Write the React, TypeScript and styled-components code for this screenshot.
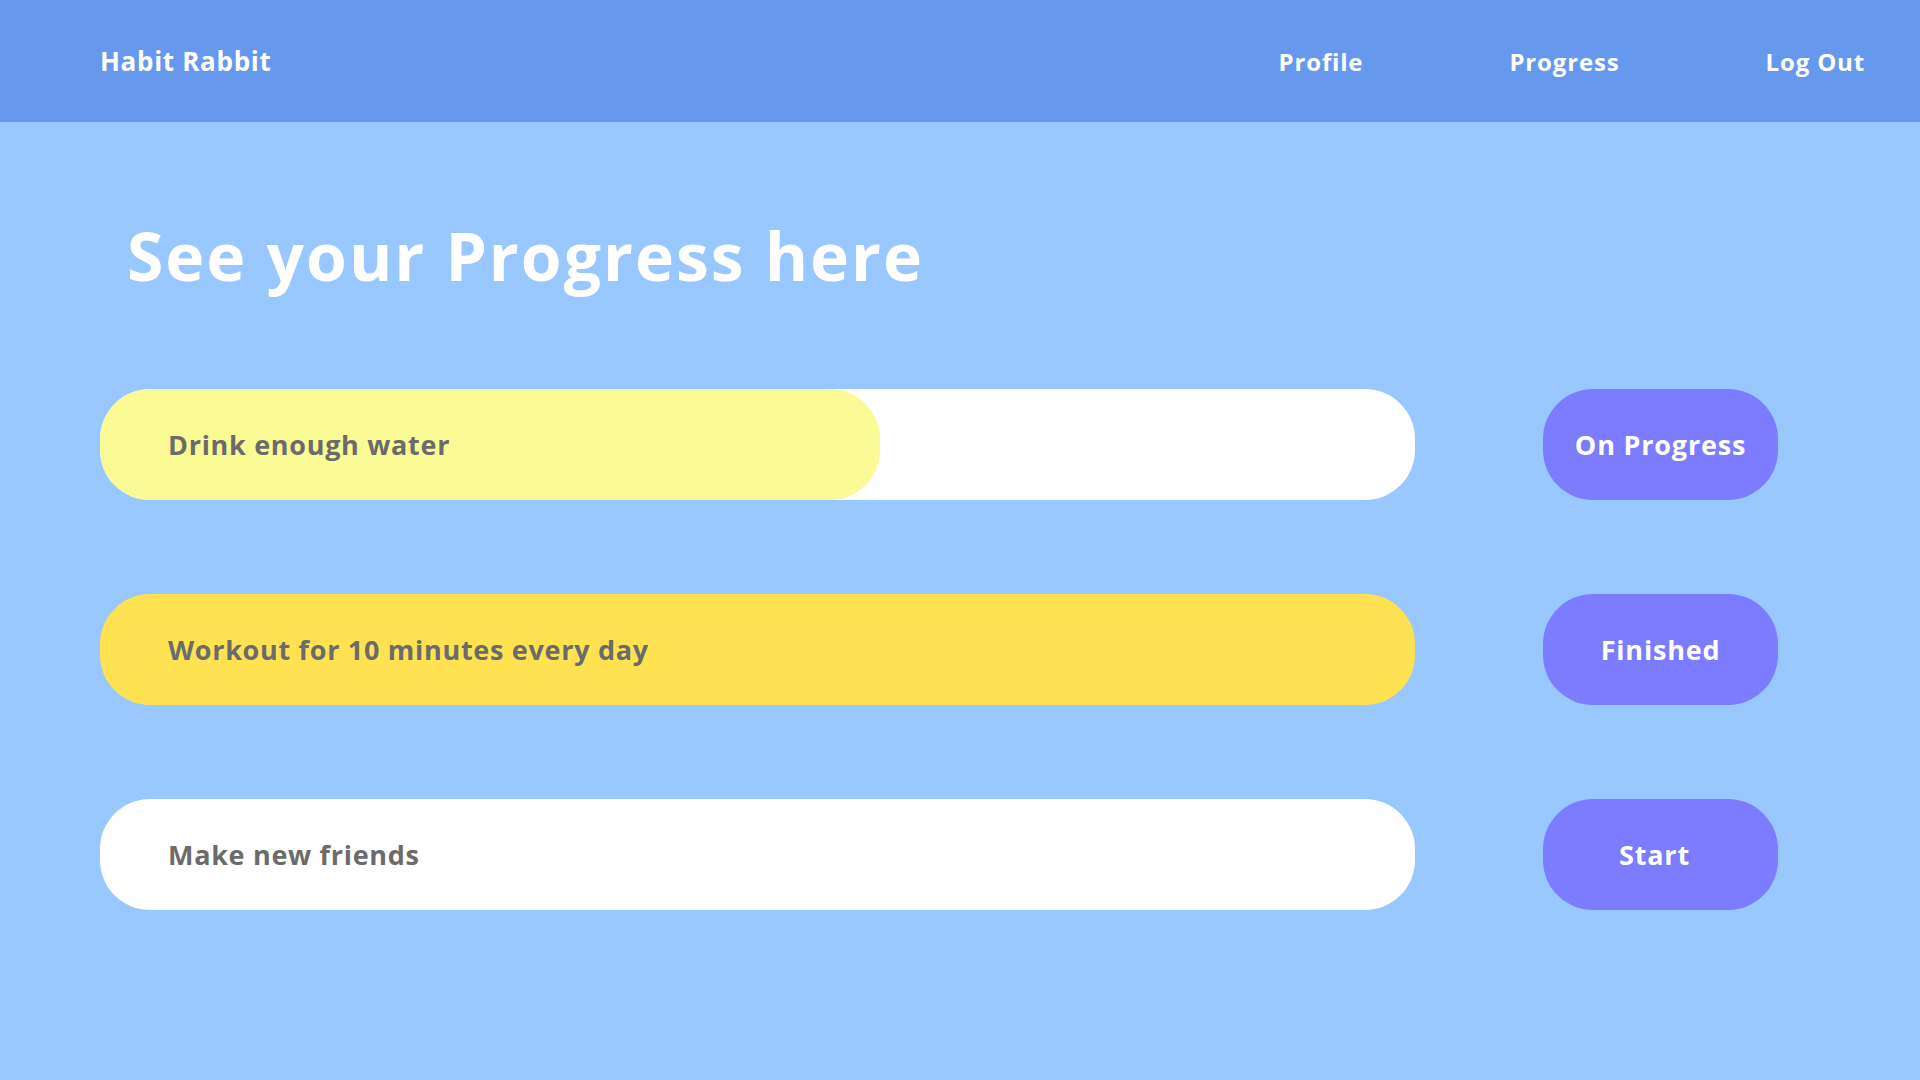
import React from "react";
import styled, { createGlobalStyle } from "styled-components";

const Global = createGlobalStyle`
  html, body { margin: 0; padding: 0; }
  body {
    background: #99c7ff;
    font-family: "Open Sans", "Liberation Sans", sans-serif;
    min-height: 1080px;
  }
`;

const Page = styled.div`
  width: 1920px;
  min-height: 1080px;
  background: #99c7ff;
`;

const Header = styled.header`
  height: 122px;
  background: #6699ee;
  display: flex;
  align-items: center;
  justify-content: space-between;
  padding: 0 55px 0 100px;
  box-sizing: border-box;
`;

const Brand = styled.div`
  color: #ffffff;
  font-weight: 700;
  font-size: 26px;
  letter-spacing: 0.7px;
`;

const Nav = styled.nav`
  display: flex;
  gap: 146px;
`;

const NavLink = styled.a`
  color: #ffffff;
  font-weight: 700;
  font-size: 24px;
  letter-spacing: 0.85px;
  text-decoration: none;
  cursor: pointer;
`;

const Main = styled.main`
  padding: 88px 100px 0 100px;
`;

const Title = styled.h1`
  margin: 0 0 0 27px;
  color: #ffffff;
  font-weight: 700;
  font-size: 66px;
  line-height: 90px;
  letter-spacing: 2px;
`;

const Rows = styled.div`
  margin-top: 89px;
  display: grid;
  grid-template-columns: 1315px 235px;
  grid-auto-rows: 111px;
  column-gap: 128px;
  row-gap: 94px;
`;

const Track = styled.div<{ $bg: string }>`
  position: relative;
  border-radius: 50px;
  background: ${(p) => p.$bg};
  overflow: hidden;
  display: flex;
  align-items: center;
`;

const Fill = styled.div`
  position: absolute;
  left: 0;
  top: 0;
  bottom: 0;
  border-radius: 50px;
  background: #fafb94;
`;

const Label = styled.span`
  position: relative;
  padding-left: 68px;
  color: #6b6b6b;
  font-weight: 700;
  font-size: 27px;
  letter-spacing: 0.7px;
`;

const StatusButton = styled.button<{ $shift?: number }>`
  border: none;
  border-radius: 50px;
  background: #7b7cff;
  color: #ffffff;
  font-family: inherit;
  font-weight: 700;
  font-size: 27px;
  letter-spacing: 0.8px;
  cursor: pointer;
  padding: 0 ${(p) => p.$shift ?? 0}px 0 0;
`;

type Habit = {
  name: string;
  bg: string;
  fill?: number;
  status: string;
  shift?: number;
};

const habits: Habit[] = [
  { name: "Drink enough water", bg: "#ffffff", fill: 780, status: "On Progress" },
  { name: "Workout for 10 minutes every day", bg: "#ffe252", status: "Finished" },
  { name: "Make new friends", bg: "#ffffff", status: "Start", shift: 12 },
];

export default function App() {
  return (
    <Page>
      <Global />
      <Header>
        <Brand>Habit Rabbit</Brand>
        <Nav>
          <NavLink>Profile</NavLink>
          <NavLink>Progress</NavLink>
          <NavLink>Log Out</NavLink>
        </Nav>
      </Header>
      <Main>
        <Title>See your Progress here</Title>
        <Rows>
          {habits.map((h) => (
            <React.Fragment key={h.name}>
              <Track $bg={h.bg}>
                {h.fill ? <Fill style={{ width: h.fill }} /> : null}
                <Label>{h.name}</Label>
              </Track>
              <StatusButton $shift={h.shift}>{h.status}</StatusButton>
            </React.Fragment>
          ))}
        </Rows>
      </Main>
    </Page>
  );
}
